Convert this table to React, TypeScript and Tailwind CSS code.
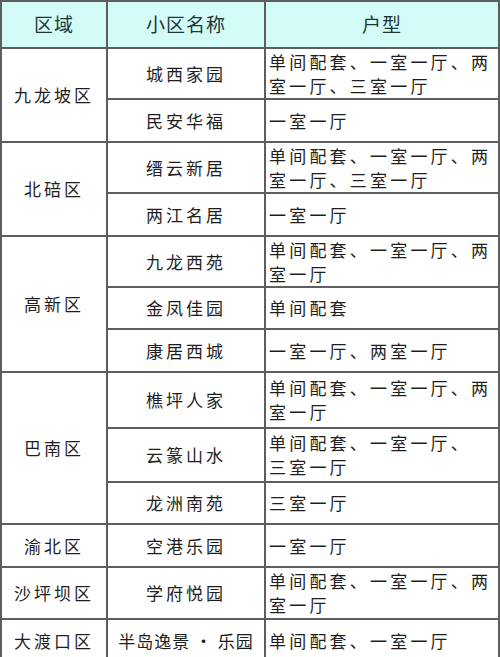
import React from "react";

interface Estate {
  name: string;
  types: string[];
  h: number;
}

interface District {
  name: string;
  estates: Estate[];
}

const districts: District[] = [
  {
    name: "九龙坡区",
    estates: [
      { name: "城西家园", types: ["单间配套、一室一厅、两", "室一厅、三室一厅"], h: 51 },
      { name: "民安华福", types: ["一室一厅"], h: 43 },
    ],
  },
  {
    name: "北碚区",
    estates: [
      { name: "缙云新居", types: ["单间配套、一室一厅、两", "室一厅、三室一厅"], h: 51 },
      { name: "两江名居", types: ["一室一厅"], h: 43 },
    ],
  },
  {
    name: "高新区",
    estates: [
      { name: "九龙西苑", types: ["单间配套、一室一厅、两", "室一厅"], h: 51 },
      { name: "金凤佳园", types: ["单间配套"], h: 42 },
      { name: "康居西城", types: ["一室一厅、两室一厅"], h: 43 },
    ],
  },
  {
    name: "巴南区",
    estates: [
      { name: "樵坪人家", types: ["单间配套、一室一厅、两", "室一厅"], h: 56 },
      { name: "云篆山水", types: ["单间配套、一室一厅、", "三室一厅"], h: 54 },
      { name: "龙洲南苑", types: ["三室一厅"], h: 42 },
    ],
  },
  {
    name: "渝北区",
    estates: [{ name: "空港乐园", types: ["一室一厅"], h: 43 }],
  },
  {
    name: "沙坪坝区",
    estates: [{ name: "学府悦园", types: ["单间配套、一室一厅、两", "室一厅"], h: 52 }],
  },
  {
    name: "大渡口区",
    estates: [{ name: "半岛逸景 · 乐园", types: ["单间配套、一室一厅"], h: 43 }],
  },
];

const cell = "border-2 border-[#5e5e5e]";

export default function App() {
  return (
    <div
      className="h-[657px] w-[500px] overflow-hidden bg-white text-[#1e1e1e]"
      style={{ fontFamily: '"Noto Sans CJK SC", "Noto Sans", sans-serif' }}
    >
      <table className="w-[500px] table-fixed border-collapse border-2 border-[#3a3a3a]">
        <colgroup>
          <col className="w-[106px]" />
          <col className="w-[158px]" />
          <col />
        </colgroup>
        <thead>
          <tr className="h-[47px] bg-[#d3fcf9] text-[19px] text-[#1d3636]">
            <th className={`${cell} font-normal tracking-[1px]`}>区域</th>
            <th className={`${cell} font-normal tracking-[1px]`}>小区名称</th>
            <th className={`${cell} font-normal tracking-[1px]`}>户型</th>
          </tr>
        </thead>
        <tbody className="text-[17px]">
          {districts.map((d) =>
            d.estates.map((e, i) => (
              <tr key={e.name} style={{ height: e.h }}>
                {i === 0 && (
                  <td rowSpan={d.estates.length} className={`${cell} text-center tracking-[3px]`}>
                    {d.name}
                  </td>
                )}
                <td
                  className={`${cell} text-center ${
                    e.name.length > 5 ? "tracking-[1px] whitespace-nowrap" : "tracking-[3px]"
                  }`}
                >
                  {e.name}
                </td>
                <td className={`${cell} pl-[3px] leading-[24px] tracking-[3.2px] whitespace-nowrap`}>
                  {e.types.map((t) => (
                    <div key={t}>{t}</div>
                  ))}
                </td>
              </tr>
            ))
          )}
        </tbody>
      </table>
    </div>
  );
}
